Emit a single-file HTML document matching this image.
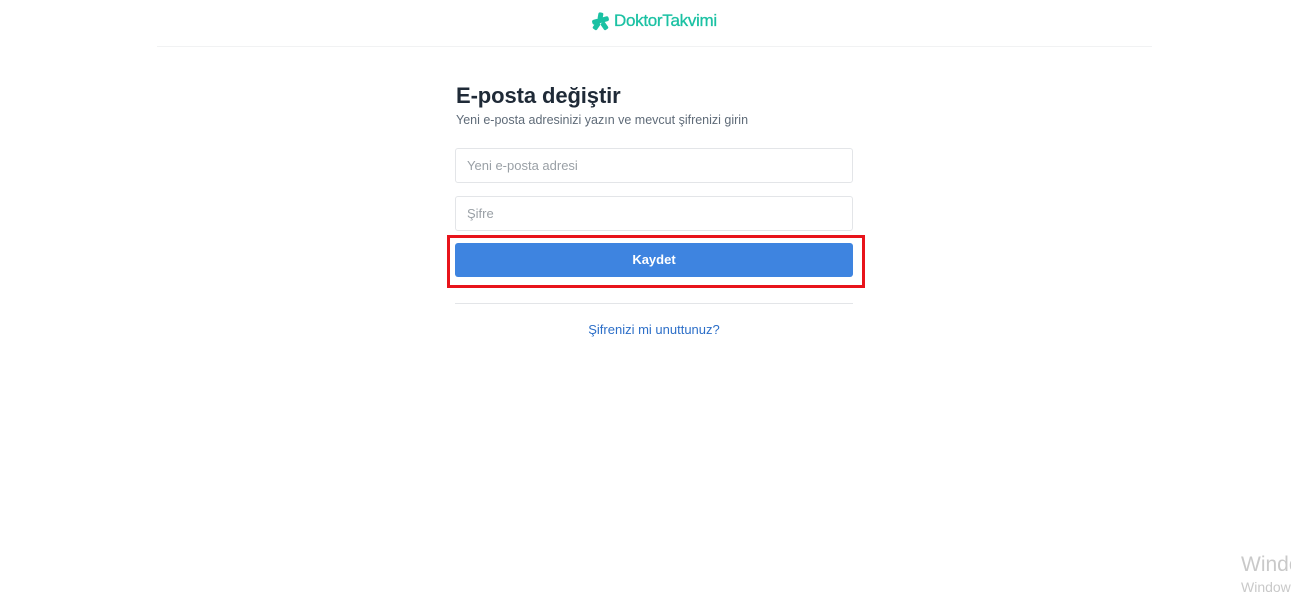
<!DOCTYPE html>
<html><head><meta charset="utf-8"><style>
body{margin:0;width:1291px;height:612px;background:#fff;position:relative;overflow:hidden;font-family:"Liberation Sans",sans-serif}
.a{position:absolute}
.inp{position:absolute;left:455px;width:396px;height:33px;border:1px solid #e3e5e8;border-radius:3px;color:#9aa0a6;font-size:13px;line-height:33px;box-sizing:content-box}
.inp span{padding-left:11px}
</style></head><body>
<div class="a" style="left:591px;top:11px;">
<svg width="19" height="19" viewBox="0 0 19 19" style="position:absolute;left:0;top:1px"><g fill="#1bc1a3"><rect x="7" y="0.5" width="5" height="7" rx="1.5" transform="rotate(10 9.5 4)"/><rect x="1" y="6" width="17" height="5" rx="2" transform="rotate(-15 9.5 8.5)"/><rect x="3" y="10" width="5" height="8" rx="1.5" transform="rotate(35 5.5 14)"/><rect x="11" y="10" width="5" height="8" rx="1.5" transform="rotate(-35 13.5 14)"/></g></svg>
<div style="position:absolute;left:23px;top:0;color:#1bc1a3;font-size:17px;white-space:nowrap;letter-spacing:-0.3px;-webkit-text-stroke:0.3px #1bc1a3">DoktorTakvimi</div>
</div>
<div class="a" style="left:157px;top:46px;width:995px;height:1px;background:#f1f2f3"></div>
<div class="a" style="left:456px;top:83px;font-size:22px;font-weight:bold;color:#1f2a37;letter-spacing:-0.1px">E-posta değiştir</div>
<div class="a" style="left:456px;top:113px;font-size:12.5px;color:#5f6b78">Yeni e-posta adresinizi yazın ve mevcut şifrenizi girin</div>
<div class="inp" style="top:148px"><span>Yeni e-posta adresi</span></div>
<div class="inp" style="top:196px"><span>Şifre</span></div>
<div class="a" style="left:447px;top:235px;width:412px;height:47px;border:3px solid #e8141b;"></div>
<div class="a" style="left:455px;top:243px;width:398px;height:34px;background:#3e84e0;border-radius:3px;color:#fff;font-weight:bold;font-size:13px;text-align:center;line-height:34px">Kaydet</div>
<div class="a" style="left:455px;top:303px;width:398px;height:1px;background:#e3e5e8"></div>
<div class="a" style="left:455px;top:322px;width:398px;text-align:center;font-size:13px;color:#2d6fc8">Şifrenizi mi unuttunuz?</div>
<div class="a" style="left:1241px;top:553px;font-size:21px;color:#c9c9c9;white-space:nowrap">Windows</div>
<div class="a" style="left:1241px;top:579px;font-size:14px;color:#c9c9c9;white-space:nowrap">Windows</div>
</body></html>
